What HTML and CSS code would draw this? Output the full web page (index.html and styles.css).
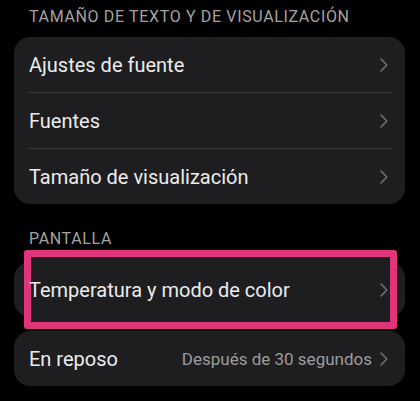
FILE: index.html
```html
<!DOCTYPE html>
<html lang="es">
<head>
<meta charset="utf-8">
<link rel="stylesheet" href="styles.css">
</head>
<body>
<div class="page">
  <div class="section-title first">TAMAÑO DE TEXTO Y DE VISUALIZACIÓN</div>
  <div class="card">
    <div class="row"><span class="label">Ajustes de fuente</span><svg class="chev" viewBox="0 0 8 14"><polyline points="1.2,1.2 6.8,7 1.2,12.8"/></svg></div>
    <div class="divider"></div>
    <div class="row"><span class="label">Fuentes</span><svg class="chev" viewBox="0 0 8 14"><polyline points="1.2,1.2 6.8,7 1.2,12.8"/></svg></div>
    <div class="divider"></div>
    <div class="row"><span class="label">Tamaño de visualización</span><svg class="chev" viewBox="0 0 8 14"><polyline points="1.2,1.2 6.8,7 1.2,12.8"/></svg></div>
  </div>
  <div class="section-title second">PANTALLA</div>
  <div class="card highlighted">
    <div class="highlight"></div>
    <div class="row"><span class="label">Temperatura y modo de color</span><svg class="chev" viewBox="0 0 8 14"><polyline points="1.2,1.2 6.8,7 1.2,12.8"/></svg></div>
  </div>
  <div class="card last">
    <div class="row"><span class="label">En reposo</span><span class="value">Después de 30 segundos</span><svg class="chev" viewBox="0 0 8 14"><polyline points="1.2,1.2 6.8,7 1.2,12.8"/></svg></div>
  </div>
</div>
</body>
</html>
```
FILE: styles.css
```css
html, body {
  margin: 0;
  padding: 0;
  background: #000;
}
body {
  font-family: Roboto, "Noto Sans", sans-serif;
  color: #e8e8e8;
  width: 420px;
  height: 401px;
  overflow: hidden;
}
.page {
  padding: 0 15px 0 14px;
}
.section-title {
  color: #a3a3a3;
  font-size: 16px;
  line-height: 20px;
  padding-left: 15px;
  letter-spacing: 0.65px;
}
.section-title.first {
  padding-top: 7px;
  padding-bottom: 10px;
}
.section-title.second {
  padding-top: 25px;
  padding-bottom: 13px;
}
.card {
  background: #1e1e20;
  border-radius: 16px;
}
.row {
  position: relative;
  display: flex;
  align-items: center;
  height: 55px;
  padding: 0 17px 0 15px;
}
.label {
  flex: 1;
  font-size: 20px;
  color: #ececec;
}
.value {
  font-size: 17px;
  color: #9c9c9c;
  margin-right: 8px;
}
.chev {
  width: 8px;
  height: 14px;
  fill: none;
  stroke: #6c6c6c;
  stroke-width: 1.7;
  stroke-linecap: round;
  stroke-linejoin: round;
}
.divider {
  height: 1px;
  background: #39393b;
  margin: 0 13px 0 14px;
}
.highlighted {
  position: relative;
}
.highlight {
  position: absolute;
  left: 10px;
  right: 8px;
  top: -12px;
  bottom: -12px;
  border: 7px solid #e0357a;
  border-radius: 3px;
  background: #1e1e20;
}
.card.last {
  margin-top: 14px;
}
```
